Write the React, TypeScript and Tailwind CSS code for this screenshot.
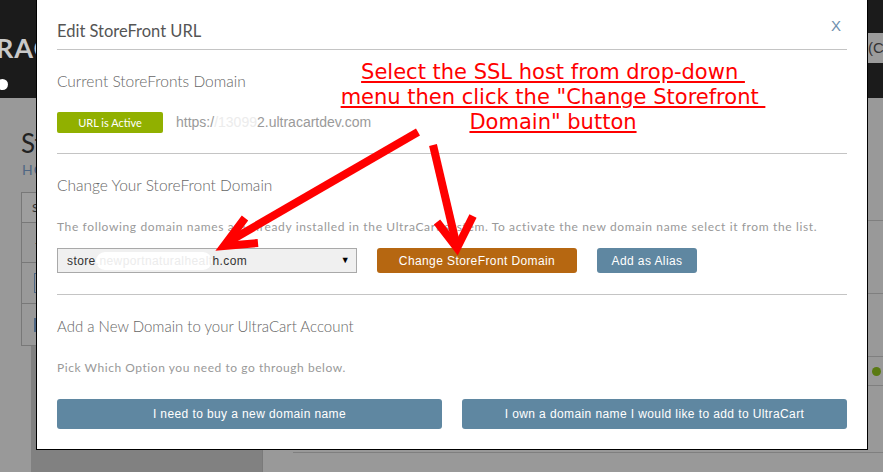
import React from "react";

export default function App() {
  return (
    <div className="relative w-[883px] h-[472px] overflow-hidden bg-[#999999] [font-family:Lato,sans-serif]">
      {/* background page (dimmed) */}
      <div className="flex flex-col h-full">
        <div className="h-[98px] bg-[#1b1b1b] flex">
          <div className="flex flex-col">
            <div className="-ml-[4px] mt-[33px] text-[27px] leading-[30px] font-bold tracking-[1px] text-[#c9c9c9]">RACART</div>
            <div className="-ml-[3px] mt-[16px] w-[11px] h-[11px] rounded-full bg-white"></div>
          </div>
          <div className="flex-1"></div>
          <div className="mt-[33px] h-[30px] w-[17px] pl-[2px] bg-[#9c9c9c] text-[15px] leading-[30px] text-[#333] [font-family:'Liberation_Sans',Arial,sans-serif] whitespace-nowrap overflow-hidden">(Ct</div>
        </div>
        <div className="flex-1 flex">
          <div className="w-[262px] flex flex-col">
            <div className="pl-[21px] pt-[29px] text-[26px] leading-[32px] text-[#222]">Storefronts</div>
            <div className="pl-[22px] pt-[2px] text-[14px] leading-[18px] text-[#4f6784] tracking-[1px]">HOME</div>
            <div className="ml-[21px] mt-[13px] border border-[#787878] text-[12px] text-[#333]">
              <div className="h-[30px] border-b border-[#787878] pl-[10px] leading-[30px] bg-[#9e9e9e]">S</div>
              <div className="h-[40px] border-b border-[#787878] pl-[13px] leading-[40px]">-</div>
              <div className="h-[41px] border-b border-[#787878] pl-[12px] flex items-center">
                <div className="w-[6px] h-[20px] border border-[#4f6784]"></div>
              </div>
              <div className="h-[41px] pl-[12px] flex items-center">
                <div className="w-[6px] h-[14px] border-b-2 border-l-2 border-[#4f6784]"></div>
              </div>
            </div>
            <div className="flex-1 ml-[31px] bg-[#818181]"></div>
          </div>
          <div className="flex-1 border-l border-[#7a7a7a] pl-[30px] flex flex-col">
            <div className="h-[123px] border-b border-[#7f7f7f]"></div>
            <div className="h-[73px] border-b border-[#7f7f7f]"></div>
            <div className="h-[63px] border-b border-[#7f7f7f]"></div>
            <div className="h-[29px] border-b border-[#7f7f7f] flex items-center justify-end pr-[2px]">
              <div className="w-[9px] h-[9px] rounded-full bg-[#5a7a12]"></div>
            </div>
            <div className="h-[67px] border-b border-[#7f7f7f]"></div>
          </div>
        </div>
      </div>

      {/* modal */}
      <div className="absolute left-[36px] top-0 w-[832px] h-[450px] bg-white border-x border-b border-black px-[20px]">
        <div className="h-[50px] border-b border-[#c4c4c4] pt-[20px]">
          <h2 className="text-[16.5px] leading-[22px] text-[#555]">Edit StoreFront URL</h2>
        </div>
        <div className="absolute right-[26px] top-[17px] text-[15px] leading-[18px] text-[#6f8fae] [font-family:'Liberation_Sans',Arial,sans-serif]">X</div>

        <div className="h-[104px] border-b border-[#c4c4c4] pt-[21px]">
          <div className="text-[15.5px] leading-[20px] font-light text-[#666]">Current StoreFronts Domain</div>
          <div className="mt-[21px] flex items-center">
            <div className="w-[106px] h-[21px] rounded-[2px] bg-[#91b000] text-white text-[11px] leading-[21px] text-center">URL is Active</div>
            <div className="ml-[13px] text-[14px] text-[#9a9a9a] [font-family:'Liberation_Sans',Arial,sans-serif] whitespace-nowrap">
              https:/<span className="text-[#ececec]">/13099</span>2.ultracartdev.com
            </div>
          </div>
        </div>

        <div className="h-[141px] border-b border-[#c4c4c4] pt-[21px]">
          <div className="text-[15.5px] leading-[20px] font-light text-[#666]">Change Your StoreFront Domain</div>
          <div className="mt-[24px] text-[12px] leading-[16px] tracking-[0.63px] text-[#999] whitespace-nowrap">
            The following domain names are already installed in the UltraCart system. To activate the new domain name select it from the list.
          </div>
          <div className="mt-[13px] flex items-center gap-[20px] [font-family:'Liberation_Sans',Arial,sans-serif]">
            <div className="w-[300px] h-[25px] bg-[#f0f0f0] border border-[#a9a9a9] flex items-center pl-[9px] pr-[6px] text-[12px] tracking-[0.4px] text-[#333]">
              <span>store</span>
              <span className="bg-white text-[#ececec] rounded-full">.newportnaturalhealt</span>
              <span>h.com</span>
              <span className="flex-1"></span>
              <span className="text-[9px] text-black">▼</span>
            </div>
            <div className="w-[200px] h-[25px] rounded-[3px] bg-[#b66711] text-white text-[12px] tracking-[0.4px] flex items-center justify-center">Change StoreFront Domain</div>
            <div className="w-[100px] h-[25px] rounded-[3px] bg-[#5f87a1] text-white text-[12px] tracking-[0.4px] flex items-center justify-center">Add as Alias</div>
          </div>
        </div>

        <div className="pt-[21px]">
          <div className="text-[15px] leading-[20px] font-light text-[#666]">Add a New Domain to your UltraCart Account</div>
          <div className="mt-[24px] text-[12px] leading-[16px] tracking-[0.55px] text-[#999]">Pick Which Option you need to go through below.</div>
          <div className="mt-[23px] grid grid-cols-2 gap-[20px] [font-family:'Liberation_Sans',Arial,sans-serif]">
            <div className="h-[30px] rounded-[3px] bg-[#5f87a1] text-white text-[12px] tracking-[0.4px] flex items-center justify-center">I need to buy a new domain name</div>
            <div className="h-[30px] rounded-[3px] bg-[#5f87a1] text-white text-[12px] tracking-[0.4px] flex items-center justify-center">I own a domain name I would like to add to UltraCart</div>
          </div>
        </div>
      </div>

      {/* annotation */}
      <div className="absolute left-[253px] top-[60px] w-[600px] text-center text-[21px] leading-[25px] text-[#ff0000] underline [font-family:'DejaVu_Sans',sans-serif] whitespace-pre">
        <div>Select the SSL host from drop-down </div>
        <div>menu then click the "Change Storefront </div>
        <div>Domain" button</div>
      </div>
      <svg className="absolute inset-0 pointer-events-none" width="883" height="472" viewBox="0 0 883 472">
        <g stroke="#ff0000" strokeWidth="8" fill="none" strokeLinejoin="miter">
          <line x1="418" y1="132" x2="228" y2="242" />
          <polyline points="245,218 224,246 258,243" />
          <line x1="433" y1="145" x2="456" y2="243" />
          <polyline points="437,222 457,248 473,216" />
        </g>
      </svg>
    </div>
  );
}
